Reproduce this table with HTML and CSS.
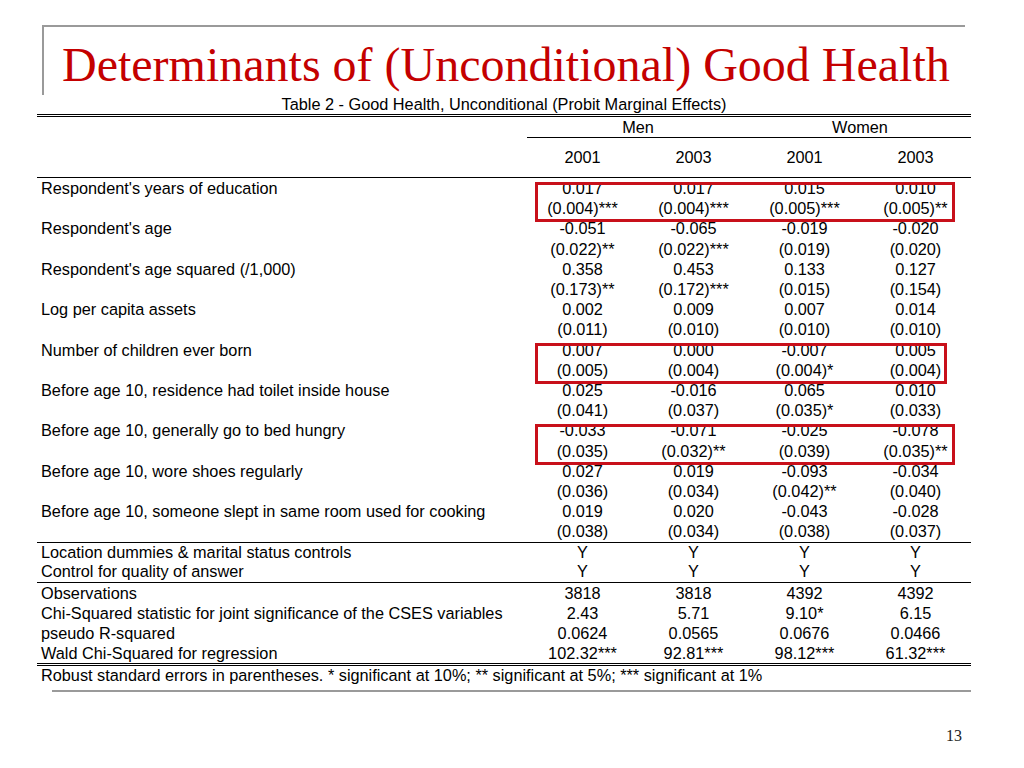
FILE: index.html
```html
<!DOCTYPE html>
<html lang="en">
<head>
<meta charset="utf-8">
<title>Determinants of (Unconditional) Good Health</title>
<link rel="stylesheet" href="styles.css">
</head>
<body>
<div class="slide">
  <header class="title-frame">
    <h1 class="title">Determinants of (Unconditional) Good Health</h1>
  </header>

  <div class="table-wrap">
    <table class="results">
      <caption>Table 2 - Good Health, Unconditional (Probit Marginal Effects)</caption>
      <colgroup>
        <col class="c-label"><col class="c-val"><col class="c-val"><col class="c-val"><col class="c-val">
      </colgroup>
      <thead>
        <tr class="group-row"><th></th><th colspan="2" class="grp">Men</th><th colspan="2" class="grp">Women</th></tr>
        <tr class="year-row"><th></th><th>2001</th><th>2003</th><th>2001</th><th>2003</th></tr>
      </thead>
      <tbody class="coef">
        <tr><td class="label">Respondent's years of education</td><td>0.017</td><td>0.017</td><td>0.015</td><td>0.010</td></tr>
        <tr><td></td><td>(0.004)***</td><td>(0.004)***</td><td>(0.005)***</td><td>(0.005)**</td></tr>
        <tr><td class="label">Respondent's age</td><td>-0.051</td><td>-0.065</td><td>-0.019</td><td>-0.020</td></tr>
        <tr><td></td><td>(0.022)**</td><td>(0.022)***</td><td>(0.019)</td><td>(0.020)</td></tr>
        <tr><td class="label">Respondent's age squared (/1,000)</td><td>0.358</td><td>0.453</td><td>0.133</td><td>0.127</td></tr>
        <tr><td></td><td>(0.173)**</td><td>(0.172)***</td><td>(0.015)</td><td>(0.154)</td></tr>
        <tr><td class="label">Log per capita assets</td><td>0.002</td><td>0.009</td><td>0.007</td><td>0.014</td></tr>
        <tr><td></td><td>(0.011)</td><td>(0.010)</td><td>(0.010)</td><td>(0.010)</td></tr>
        <tr><td class="label">Number of children ever born</td><td>0.007</td><td>0.000</td><td>-0.007</td><td>0.005</td></tr>
        <tr><td></td><td>(0.005)</td><td>(0.004)</td><td>(0.004)*</td><td>(0.004)</td></tr>
        <tr><td class="label">Before age 10, residence had toilet inside house</td><td>0.025</td><td>-0.016</td><td>0.065</td><td>0.010</td></tr>
        <tr><td></td><td>(0.041)</td><td>(0.037)</td><td>(0.035)*</td><td>(0.033)</td></tr>
        <tr><td class="label">Before age 10, generally go to bed hungry</td><td>-0.033</td><td>-0.071</td><td>-0.025</td><td>-0.078</td></tr>
        <tr><td></td><td>(0.035)</td><td>(0.032)**</td><td>(0.039)</td><td>(0.035)**</td></tr>
        <tr><td class="label">Before age 10, wore shoes regularly</td><td>0.027</td><td>0.019</td><td>-0.093</td><td>-0.034</td></tr>
        <tr><td></td><td>(0.036)</td><td>(0.034)</td><td>(0.042)**</td><td>(0.040)</td></tr>
        <tr><td class="label">Before age 10, someone slept in same room used for cooking</td><td>0.019</td><td>0.020</td><td>-0.043</td><td>-0.028</td></tr>
        <tr><td></td><td>(0.038)</td><td>(0.034)</td><td>(0.038)</td><td>(0.037)</td></tr>
      </tbody>
      <tbody class="controls">
        <tr class="rule-top"><td class="label">Location dummies &amp; marital status controls</td><td>Y</td><td>Y</td><td>Y</td><td>Y</td></tr>
        <tr><td class="label">Control for quality of answer</td><td>Y</td><td>Y</td><td>Y</td><td>Y</td></tr>
      </tbody>
      <tbody class="stats">
        <tr class="rule-top"><td class="label">Observations</td><td>3818</td><td>3818</td><td>4392</td><td>4392</td></tr>
        <tr><td class="label">Chi-Squared statistic for joint significance of the CSES variables</td><td>2.43</td><td>5.71</td><td>9.10*</td><td>6.15</td></tr>
        <tr><td class="label">pseudo R-squared</td><td>0.0624</td><td>0.0565</td><td>0.0676</td><td>0.0466</td></tr>
        <tr><td class="label">Wald Chi-Squared for regression</td><td>102.32***</td><td>92.81***</td><td>98.12***</td><td>61.32***</td></tr>
      </tbody>
      <tfoot>
        <tr><td colspan="5" class="note">Robust standard errors in parentheses. * significant at 10%; ** significant at 5%; *** significant at 1%</td></tr>
      </tfoot>
    </table>

    <div class="highlight hl-education"></div>
    <div class="highlight hl-children"></div>
    <div class="highlight hl-hungry"></div>
  </div>

  <div class="bottom-rule"></div>
  <div class="page-num">13</div>
</div>
</body>
</html>
```

FILE: styles.css
```css
html, body {
  margin: 0;
  padding: 0;
  background: #ffffff;
}

.slide {
  width: 1024px;
  height: 768px;
  padding-top: 25px;
  box-sizing: border-box;
  overflow: hidden;
  font-family: "Liberation Sans", Arial, sans-serif;
  color: #000;
}

.title-frame {
  margin-left: 42px;
  width: 921px;
  height: 68px;
  border-top: 2px solid #9a9a9a;
  border-left: 2px solid #9a9a9a;
}

.title {
  margin: 14px 0 0 18px;
  font-family: "Liberation Serif", "Times New Roman", serif;
  font-weight: normal;
  font-size: 48px;
  line-height: 48px;
  color: #c40000;
  white-space: nowrap;
}

.table-wrap {
  position: relative;
  margin-left: 37px;
  width: 934px;
}

.results {
  width: 934px;
  border-collapse: separate;
  border-spacing: 0;
  border-top: 3px double #000;
  font-size: 16.3px;
  table-layout: fixed;
}

.results caption {
  caption-side: top;
  text-align: center;
  font-size: 16.3px;
  line-height: 19px;
  height: 19px;
  white-space: nowrap;
}

.c-label { width: 490px; }
.c-val { width: 111px; }

.results th,
.results td {
  padding: 0;
  font-weight: normal;
  text-align: center;
  white-space: nowrap;
}

.results td.label {
  text-align: left;
  padding-left: 4px;
}

.group-row th {
  line-height: 20px;
}

.group-row th.grp {
  border-bottom: 1px solid #000;
}

.year-row th {
  line-height: 39px;
  border-bottom: 1px solid #000;
}

.coef td {
  line-height: 20.2px;
}

.controls td {
  line-height: 19.5px;
}

.stats td {
  line-height: 20.1px;
}

.rule-top td {
  border-top: 1px solid #000;
}

.results td.note {
  text-align: left;
  padding-left: 4px;
  line-height: 19px;
  border-top: 3px double #000;
}

.highlight {
  position: absolute;
  border: 3px solid #c8101a;
  box-sizing: border-box;
  pointer-events: none;
}

.hl-education { left: 498px; top: 87px; width: 420px; height: 40px; }
.hl-children  { left: 498px; top: 248px; width: 412px; height: 41px; }
.hl-hungry    { left: 498px; top: 329px; width: 420px; height: 41px; }

.bottom-rule {
  margin: 5px 0 0 52px;
  width: 919px;
  height: 2px;
  background: #9a9a9a;
}

.page-num {
  margin-top: 36px;
  padding-right: 62px;
  text-align: right;
  font-family: "Liberation Serif", "Times New Roman", serif;
  font-size: 16px;
  line-height: 16px;
  color: #222;
}
```
